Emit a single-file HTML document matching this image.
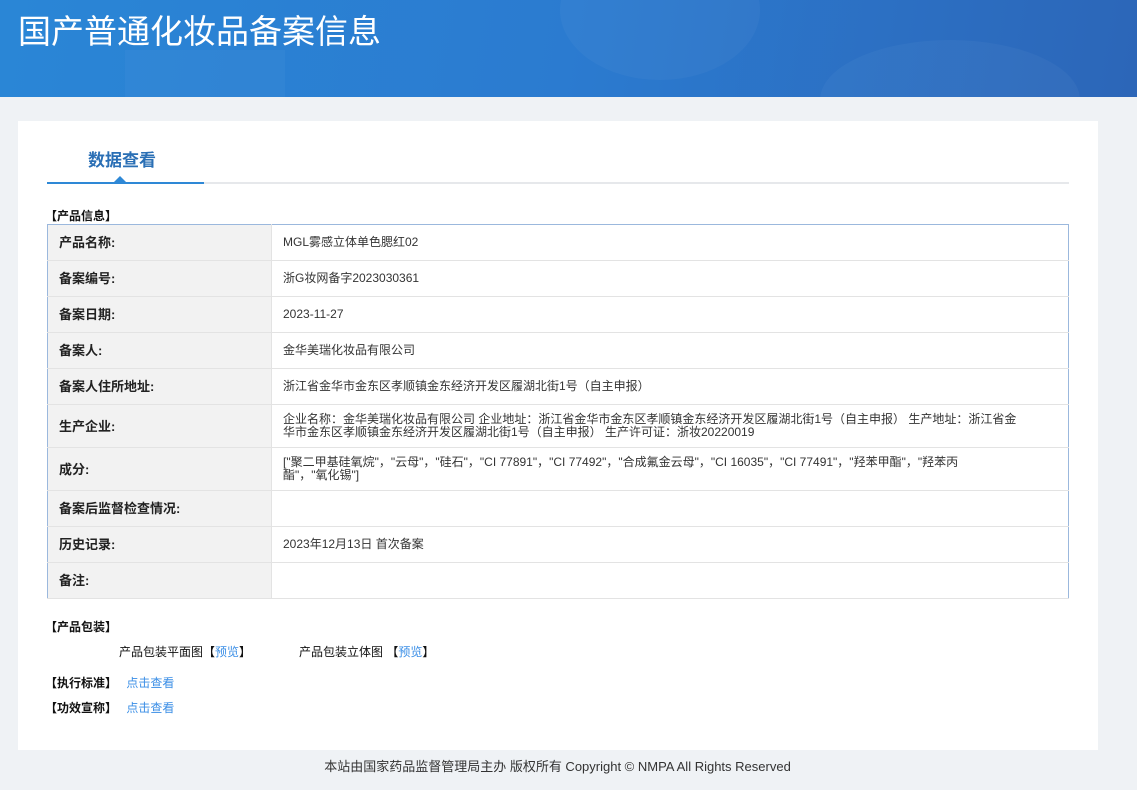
<!DOCTYPE html>
<html><head><meta charset="utf-8"><style>
*{margin:0;padding:0;box-sizing:border-box}
body{width:1137px;height:790px;background:#eff2f5;font-family:"Liberation Sans","Noto Sans CJK SC",sans-serif;position:relative;overflow:hidden;color:#333}
.hdr{position:absolute;left:0;top:0;width:1137px;height:97px;background:linear-gradient(100deg,#2a86d6 0%,#2b7bd0 50%,#2c66b8 100%);overflow:hidden}
.hdr h1{position:absolute;left:18px;top:10px;font-size:33px;font-weight:normal;color:#fff;letter-spacing:0px;line-height:44px}
.blob{position:absolute;border-radius:50%;background:rgba(255,255,255,0.035)}
.card{position:absolute;left:18px;top:121px;width:1080px;height:629px;background:#fff}
.tab{position:absolute;left:70px;top:25px;font-size:17px;font-weight:bold;color:#2a6fb5}
.line{position:absolute;left:29px;top:61px;width:1022px;height:2px;background:#e6e8eb}
.line i{position:absolute;left:0;top:0;width:157px;height:2px;background:#2e88d6}
.tri{position:absolute;left:96px;top:55px;width:0;height:0;border-left:6px solid transparent;border-right:6px solid transparent;border-bottom:6px solid #2e88d6}
.sec{position:absolute;left:27px;font-size:12px;font-weight:bold;color:#111}
table{position:absolute;left:29px;top:103px;width:1022px;border-collapse:collapse;border:1px solid #9bb8dd;font-size:12px}
td{border-bottom:1px solid #e3e3e3;vertical-align:middle;line-height:13px}
td.l{width:224px;background:#f2f2f2;font-weight:bold;font-size:13px;padding-left:11px;color:#222;border-right:1px solid #e3e3e3}
td.v{padding-left:11px;color:#333;padding-right:50px}
a{color:#3a8ee6;text-decoration:none}
.txt{position:absolute;font-size:12px;color:#111}
.foot{position:absolute;top:756px;left:-11px;width:1137px;text-align:center;font-size:13px;color:#333}
</style></head><body>
<div class="hdr">
<div class="blob" style="left:560px;top:-60px;width:200px;height:140px"></div>
<div class="blob" style="left:820px;top:40px;width:260px;height:120px"></div>
<div style="position:absolute;left:125px;top:50px;width:160px;height:60px;background:rgba(255,255,255,0.03)"></div>
<h1>国产普通化妆品备案信息</h1></div>
<div class="card">
<div class="tab">数据查看</div>
<div class="line"><i></i></div><div class="tri"></div>
<div class="sec" style="top:86px">【产品信息】</div>
<table>
<tr style="height:36px"><td class="l">产品名称:</td><td class="v">MGL雾感立体单色腮红02</td></tr>
<tr style="height:36px"><td class="l">备案编号:</td><td class="v">浙G妆网备字2023030361</td></tr>
<tr style="height:36px"><td class="l">备案日期:</td><td class="v">2023-11-27</td></tr>
<tr style="height:36px"><td class="l">备案人:</td><td class="v">金华美瑞化妆品有限公司</td></tr>
<tr style="height:36px"><td class="l">备案人住所地址:</td><td class="v">浙江省金华市金东区孝顺镇金东经济开发区履湖北街1号（自主申报）</td></tr>
<tr style="height:43px"><td class="l">生产企业:</td><td class="v">企业名称：金华美瑞化妆品有限公司 企业地址：浙江省金华市金东区孝顺镇金东经济开发区履湖北街1号（自主申报） 生产地址：浙江省金华市金东区孝顺镇金东经济开发区履湖北街1号（自主申报） 生产许可证：浙妆20220019</td></tr>
<tr style="height:43px"><td class="l">成分:</td><td class="v" style="padding-right:75px">["聚二甲基硅氧烷"，"云母"，"硅石"，"CI 77891"，"CI 77492"，"合成氟金云母"，"CI 16035"，"CI 77491"，"羟苯甲酯"，"羟苯丙酯"，"氧化锡"]</td></tr>
<tr style="height:36px"><td class="l">备案后监督检查情况:</td><td class="v"></td></tr>
<tr style="height:36px"><td class="l">历史记录:</td><td class="v">2023年12月13日 首次备案</td></tr>
<tr style="height:36px"><td class="l">备注:</td><td class="v"></td></tr>
</table>
<div class="sec" style="top:497px">【产品包装】</div>
<div class="txt" style="left:101px;top:522px">产品包装平面图【<a>预览</a>】</div>
<div class="txt" style="left:281px;top:522px">产品包装立体图 【<a>预览</a>】</div>
<div class="sec" style="top:553px">【执行标准】 <a style="font-weight:normal;margin-left:6px">点击查看</a></div>
<div class="sec" style="top:578px">【功效宣称】 <a style="font-weight:normal;margin-left:6px">点击查看</a></div>
</div>
<div class="foot">本站由国家药品监督管理局主办 版权所有 Copyright © NMPA All Rights Reserved</div>
</body></html>
